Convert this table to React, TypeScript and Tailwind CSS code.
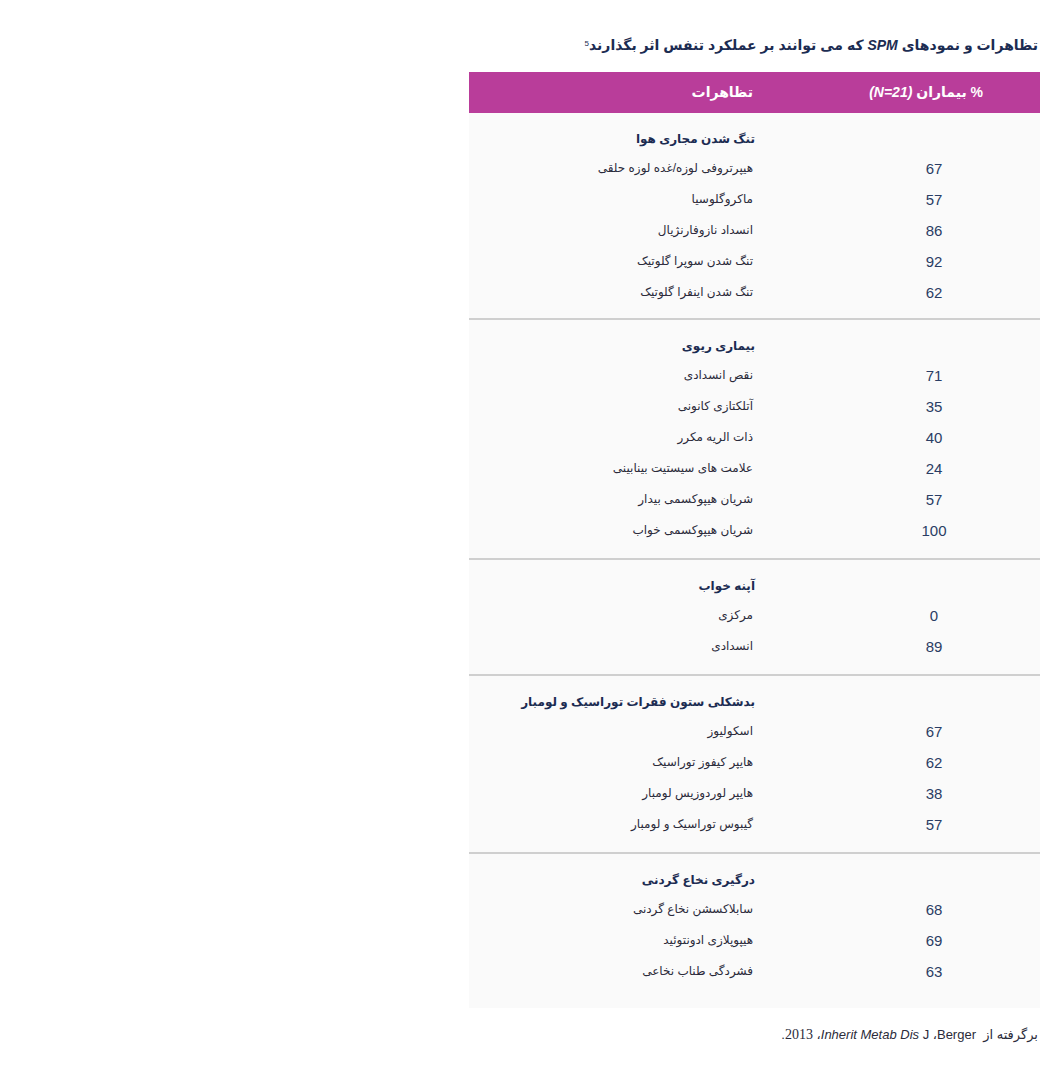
import React from "react";

type Row = { label: string; value: string };
type Section = { title: string; rows: Row[] };

const sections: Section[] = [
  {
    title: "تنگ شدن مجاری هوا",
    rows: [
      { label: "هیپرتروفی لوزه/غده لوزه حلقی", value: "67" },
      { label: "ماکروگلوسیا", value: "57" },
      { label: "انسداد نازوفارنژیال", value: "86" },
      { label: "تنگ شدن سوپرا گلوتیک", value: "92" },
      { label: "تنگ شدن اینفرا گلوتیک", value: "62" },
    ],
  },
  {
    title: "بیماری ریوی",
    rows: [
      { label: "نقص انسدادی", value: "71" },
      { label: "آتلکتازی کانونی", value: "35" },
      { label: "ذات الریه مکرر", value: "40" },
      { label: "علامت های سیستیت بینابینی", value: "24" },
      { label: "شریان هیپوکسمی بیدار", value: "57" },
      { label: "شریان هیپوکسمی خواب", value: "100" },
    ],
  },
  {
    title: "آپنه خواب",
    rows: [
      { label: "مرکزی", value: "0" },
      { label: "انسدادی", value: "89" },
    ],
  },
  {
    title: "بدشکلی ستون فقرات توراسیک و لومبار",
    rows: [
      { label: "اسکولیوز", value: "67" },
      { label: "هایپر کیفوز توراسیک", value: "62" },
      { label: "هایپر لوردوزیس لومبار", value: "38" },
      { label: "گیبوس توراسیک و لومبار", value: "57" },
    ],
  },
  {
    title: "درگیری نخاع گردنی",
    rows: [
      { label: "سابلاکسشن نخاع گردنی", value: "68" },
      { label: "هیپوپلازی ادونتوئید", value: "69" },
      { label: "فشردگی طناب نخاعی", value: "63" },
    ],
  },
];

export default function App() {
  return (
    <div
      dir="rtl"
      className="min-h-screen w-[1042px] bg-white pr-[2px] pt-[33px] text-[#1c2c52]"
      style={{ fontFamily: '"Liberation Sans", "DejaVu Sans", sans-serif' }}
    >
      <h1 className="h-[24px] pr-[2px] text-[14px] font-bold leading-[24px]">
        تظاهرات و نمودهای <span className="italic">SPM</span> که می توانند بر
        عملکرد تنفس اثر بگذارند
        <sup className="text-[8px] font-normal">5</sup>
      </h1>

      <div className="mt-[15px] w-[571px]">
        {/* header */}
        <div className="flex h-[41px] items-center bg-[#b93d9a] text-[14px] font-bold text-white">
          <div className="w-[275px] pr-[57px]">
            % بیماران <span className="italic">(N=21)</span>
          </div>
          <div className="pr-[12px]">تظاهرات</div>
        </div>

        {/* body */}
        <div className="bg-[#fafafa]">
          {sections.map((section, i) => (
            <div
              key={section.title}
              className={`pt-[11px] ${
                i === sections.length - 1
                  ? "pb-[20px]"
                  : i === 0
                  ? "border-b-2 border-[#cfcfcf] pb-[9px]"
                  : "border-b-2 border-[#cfcfcf] pb-[11px]"
              }`}
            >
              <div className="flex h-[30px] items-center">
                <div className="w-[275px]" />
                <div className="pr-[10px] text-[12px] font-bold">
                  {section.title}
                </div>
              </div>
              {section.rows.map((row) => (
                <div key={row.label} className="flex h-[31px] items-center">
                  <div className="w-[275px] pr-[80px]">
                    <div className="w-[52px] text-center text-[15px] text-[#2a3d64]">
                      {row.value}
                    </div>
                  </div>
                  <div className="-mt-[3px] pr-[12px] text-[12px] text-[#2b2b3a]">
                    {row.label}
                  </div>
                </div>
              ))}
            </div>
          ))}
        </div>
      </div>

      <p className="mt-[16px] pr-[2px] text-[13px] text-[#2b2b3a]">
        برگرفته از&nbsp; <bdi>Berger</bdi>، <bdi>J</bdi>{" "}
        <bdi className="italic">Inherit Metab Dis</bdi>،{" "}
        <bdi
          className="text-[14px]"
          style={{ fontFamily: '"Liberation Serif", serif' }}
        >
          2013
        </bdi>
        .
      </p>
    </div>
  );
}
